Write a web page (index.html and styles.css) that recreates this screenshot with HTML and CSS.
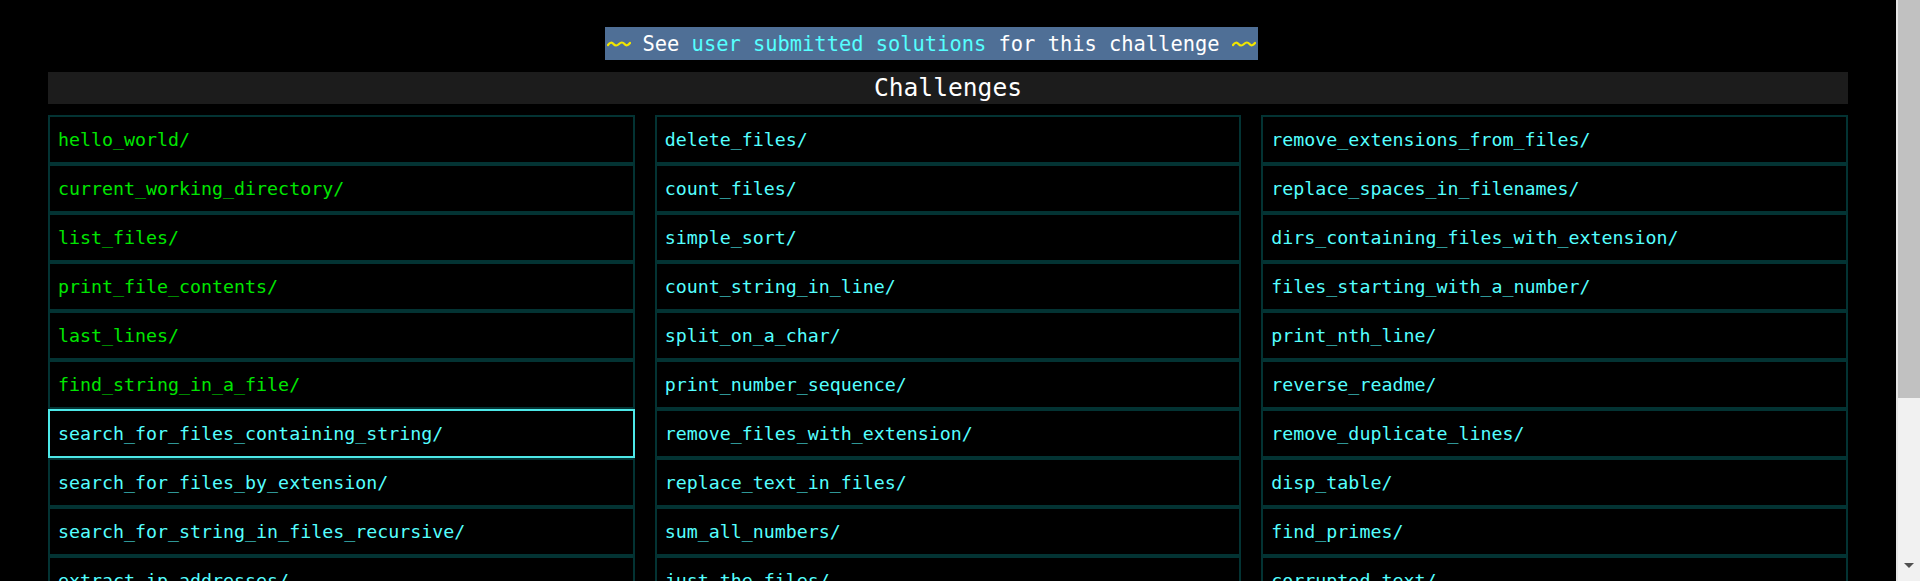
FILE: index.html
```html
<!DOCTYPE html>
<html lang="en">
<head>
<meta charset="utf-8">
<title>Challenges</title>
<link rel="stylesheet" href="styles.css">
</head>
<body>
<div class="viewport">
  <main class="main">
    <div class="page">
      <div class="banner-row">
        <div class="banner">
          <svg class="wave" viewBox="0 0 24 10" width="24" height="10"><path d="M1 6 Q4 2 6.5 5 T12 5 T17.5 5 T23 4" fill="none" stroke="#f2e600" stroke-width="2.2" stroke-linecap="round"/></svg>
          <span class="btext">See <a class="blink" href="#">user submitted solutions</a> for this challenge</span>
          <svg class="wave" viewBox="0 0 24 10" width="24" height="10"><path d="M1 6 Q4 2 6.5 5 T12 5 T17.5 5 T23 4" fill="none" stroke="#f2e600" stroke-width="2.2" stroke-linecap="round"/></svg>
        </div>
      </div>
      <div class="header">Challenges</div>
      <div class="grid">
        <a class="cell done" href="#">hello_world/</a>
        <a class="cell done" href="#">current_working_directory/</a>
        <a class="cell done" href="#">list_files/</a>
        <a class="cell done" href="#">print_file_contents/</a>
        <a class="cell done" href="#">last_lines/</a>
        <a class="cell done" href="#">find_string_in_a_file/</a>
        <a class="cell active" href="#">search_for_files_containing_string/</a>
        <a class="cell" href="#">search_for_files_by_extension/</a>
        <a class="cell" href="#">search_for_string_in_files_recursive/</a>
        <a class="cell" href="#">extract_ip_addresses/</a>
        <a class="cell" href="#">delete_files/</a>
        <a class="cell" href="#">count_files/</a>
        <a class="cell" href="#">simple_sort/</a>
        <a class="cell" href="#">count_string_in_line/</a>
        <a class="cell" href="#">split_on_a_char/</a>
        <a class="cell" href="#">print_number_sequence/</a>
        <a class="cell" href="#">remove_files_with_extension/</a>
        <a class="cell" href="#">replace_text_in_files/</a>
        <a class="cell" href="#">sum_all_numbers/</a>
        <a class="cell" href="#">just_the_files/</a>
        <a class="cell" href="#">remove_extensions_from_files/</a>
        <a class="cell" href="#">replace_spaces_in_filenames/</a>
        <a class="cell" href="#">dirs_containing_files_with_extension/</a>
        <a class="cell" href="#">files_starting_with_a_number/</a>
        <a class="cell" href="#">print_nth_line/</a>
        <a class="cell" href="#">reverse_readme/</a>
        <a class="cell" href="#">remove_duplicate_lines/</a>
        <a class="cell" href="#">disp_table/</a>
        <a class="cell" href="#">find_primes/</a>
        <a class="cell" href="#">corrupted_text/</a>
      </div>
    </div>
  </main>
  <div class="scrollbar" aria-hidden="true">
    <div class="thumb"></div>
    <div class="track-rest"></div>
    <div class="arrow-down"><span class="tri"></span></div>
  </div>
</div>
</body>
</html>
```
FILE: styles.css
```css
html, body {
  margin: 0;
  height: 100%;
  overflow: hidden;
  background: #000;
}
body {
  color: #fff;
  font-family: "DejaVu Sans Mono", "Liberation Mono", monospace;
}
.viewport {
  display: flex;
  height: 100vh;
}
.main {
  flex: 1;
  min-width: 0;
  overflow: hidden;
}
.page {
  width: 1800px;
  margin: 0 auto;
  padding-top: 27px;
}
.banner-row {
  display: flex;
  justify-content: center;
}
.banner {
  display: inline-flex;
  align-items: center;
  gap: 12px;
  height: 33px;
  padding: 0 2px;
  margin-right: 34px;
  background: #4f6f96;
  font-size: 20.4px;
  color: #fff;
}
.wave {
  display: block;
}
.blink {
  color: #55ffff;
  text-decoration: none;
}
.header {
  margin-top: 12px;
  height: 32px;
  line-height: 32px;
  background: #1c1c1c;
  text-align: center;
  font-size: 24.6px;
  color: #fff;
}
.grid {
  margin-top: 11px;
  display: grid;
  grid-template-columns: repeat(3, 1fr);
  grid-template-rows: repeat(10, 49px);
  grid-auto-flow: column;
  column-gap: 20px;
}
.cell {
  display: flex;
  align-items: center;
  padding-left: 8px;
  border: 2px solid #033333;
  color: #55ffff;
  text-decoration: none;
  font-size: 18.3px;
}
.cell.done {
  color: #00e600;
}
.cell.active {
  border-color: #4de8e8;
}
.scrollbar {
  width: 24px;
  flex: none;
  display: flex;
  flex-direction: column;
  background: #f1f1f1;
  border-left: 2px solid #e6e6e6;
  box-sizing: border-box;
}
.thumb {
  height: 398px;
  background: #c1c1c1;
}
.track-rest {
  flex: 1;
}
.arrow-down {
  height: 22px;
  display: flex;
  justify-content: center;
  align-items: flex-start;
  padding-top: 4px;
  box-sizing: border-box;
}
.tri {
  width: 0;
  height: 0;
  border-left: 5px solid transparent;
  border-right: 5px solid transparent;
  border-top: 5px solid #505050;
}
```
